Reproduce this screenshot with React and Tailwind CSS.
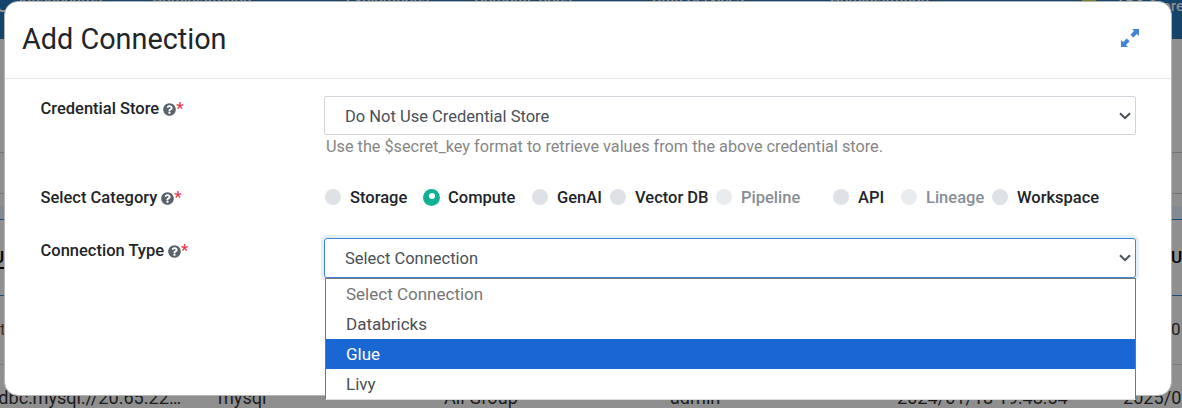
import { FaQuestionCircle } from "react-icons/fa";

const categories = [
  { name: "Storage" },
  { name: "Compute", checked: true },
  { name: "GenAI" },
  { name: "Vector DB" },
  { name: "Pipeline", disabled: true },
  { name: "API" },
  { name: "Lineage", disabled: true },
  { name: "Workspace" },
];

const options = ["Select Connection", "Databricks", "Glue", "Livy"];

function Backdrop() {
  return (
    <div className="h-[408px] overflow-hidden bg-[#8f8f8f] text-[17px] text-[#1c1c1c]">
      <div className="flex h-[39px] items-start justify-between overflow-hidden bg-[#15446a] text-[#8f8f8f]">
        <div className="-mt-[10px] grid grid-cols-[145px_167px_160px_148px_173px_286px_auto] pl-[2px] text-[15px] leading-4 font-medium whitespace-nowrap">
          <span className="-ml-1 h-[22px] w-6 rounded border-2 border-[#8f8f8f]" />
          <span className="-ml-[125px] flex gap-[50px]">
            <span>Dashboards</span>
            <span>Administration</span>
          </span>
          <span className="pl-[32px]">Explorations</span>
          <span>Compute Jobs</span>
          <span className="pl-[30px]">Data Services</span>
          <span className="pl-[35px]">Administration</span>
          <span className="mt-[6px] h-4 w-4 rounded-full bg-[#77802f]" />
        </div>
        <span className="-mt-[6px] -mr-[2px] text-[15px] leading-6 font-medium whitespace-nowrap">ABC Store</span>
      </div>
      <div className="h-[114px] border-b border-[#747474]" />
      <div className="h-[41px] border-b border-[#747474]" />
      <div className="h-3" />
      <div className="h-[14px] border-b border-[#154f7b] bg-[#838a91]" />
      <div className="flex h-[76px] items-center justify-between border-b border-[#154f7b] font-medium text-black">
        <span className="-ml-[8px] w-3 border-b-2 border-black text-right leading-5">U</span>
        <span className="w-[11px] overflow-hidden">U</span>
      </div>
      <div className="flex h-[69px] items-center justify-between border-b border-[#7d7d7d]">
        <span className="text-[#4d2c12]">t</span>
        <span className="w-[11px]">0</span>
      </div>
      <div className="grid h-[65px] grid-cols-[218px_226px_226px_227px_226px_60px] items-center text-[18.1px] whitespace-nowrap">
        <span className="-ml-[6px]">jdbc:mysql://20.65.22…</span>
        <span>mysql</span>
        <span>All Group</span>
        <span>admin</span>
        <span>2024/01/18 19:48:54</span>
        <span>2025/01</span>
      </div>
    </div>
  );
}

function FieldLabel({ children }) {
  return (
    <div className="flex items-center self-start pt-px pl-[0.5px] text-[16.5px] leading-6 font-medium whitespace-nowrap text-[#212529]">
      <span>{children}</span>
      <FaQuestionCircle className="ml-1 h-[13px] w-[13px] text-[#59636d]" />
      <span className="text-[#e63950]">*</span>
    </div>
  );
}

function Chevron() {
  return (
    <svg className="h-[8px] w-3" viewBox="0 0 12 8" fill="none" stroke="#495057" strokeWidth="2">
      <path d="M1 1.2 6 6.2 11 1.2" />
    </svg>
  );
}

function Category({ name, checked, disabled }) {
  return (
    <label className={`flex items-center gap-[9px] ${disabled ? "text-[#868e96]" : "text-[#212529]"}`}>
      <span
        className={`flex shrink-0 items-center justify-center rounded-full ${
          checked ? "-mr-px h-[17px] w-[17px] bg-[#10b193]" : disabled ? "h-4 w-4 bg-[#e9ecef]" : "h-4 w-4 bg-[#dee2e6]"
        }`}
      >
        {checked && <span className="mb-[2px] h-[6px] w-[6px] rounded-full bg-white" />}
      </span>
      <span className="pt-[2px]">{name}</span>
    </label>
  );
}

export default function App() {
  return (
    <div className="relative h-[408px] w-[1182px] overflow-hidden font-['Roboto',sans-serif]">
      <Backdrop />
      <div className="absolute top-[1px] left-1 h-[395px] w-[1168px] rounded-[14px] border border-[#b5b5b5] bg-white">
        <header className="flex h-[77px] items-center justify-between border-b border-[#e5e8ea] pr-[32px] pb-[3px] pl-[17px]">
          <h1 className="text-[28.8px] leading-9 text-[#212529]">Add Connection</h1>
          <svg className="-mt-px h-[18px] w-[18px]" viewBox="0 0 18 18" fill="#4285d6">
            <path d="M11 0H18V7L15.9 5 12.2 8.6 9.4 5.8 13 2.1ZM7 18H0V11L2.1 13 5.8 9.4 8.6 12.2 5 15.9Z" />
          </svg>
        </header>
        <main className="grid grid-cols-[284px_812px] grid-rows-[81px_61px_auto] pt-[17px] pl-[35px]">
          <FieldLabel>Credential Store</FieldLabel>
          <div>
            <div className="flex h-[39px] items-center justify-between rounded-[2px] border border-[#ced4da] pr-1 pl-5 text-[16.5px] text-[#495057]">
              <span className="pt-[3px]">Do Not Use Credential Store</span>
              <Chevron />
            </div>
            <p className="pl-[2px] text-[16.25px] leading-[23px] text-[#868686]">
              Use the $secret_key format to retrieve values from the above credential store.
            </p>
          </div>
          <div className="pt-[8px]">
            <FieldLabel>Select Category</FieldLabel>
          </div>
          <div className="grid h-10 grid-cols-[98px_109px_78px_106px_117px_68px_91px_120px] items-center pl-[1px] text-[16.5px] font-medium whitespace-nowrap">
            {categories.map((category) => (
              <Category key={category.name} {...category} />
            ))}
          </div>
          <FieldLabel>Connection Type</FieldLabel>
          <div className="text-[16.5px] text-[#495057]">
            <div className="flex h-10 items-center justify-between rounded-[3px] border border-[#4285d6] pr-1 pl-5 shadow-[0_0_0_3px_#e5eff7]">
              <span className="pt-[2px]">Select Connection</span>
              <Chevron />
            </div>
            <ul className="relative ml-px h-[122px] border border-[#767676] border-b-[#dddddd] bg-white text-[17px]">
              {options.map((option, index) => (
                <li
                  key={option}
                  className={`flex h-[30px] items-center pt-px pl-5 ${
                    index === 2 ? "bg-[#1967d2] text-white" : index === 0 ? "text-[#757575]" : ""
                  }`}
                >
                  {option}
                </li>
              ))}
            </ul>
          </div>
        </main>
      </div>
    </div>
  );
}
